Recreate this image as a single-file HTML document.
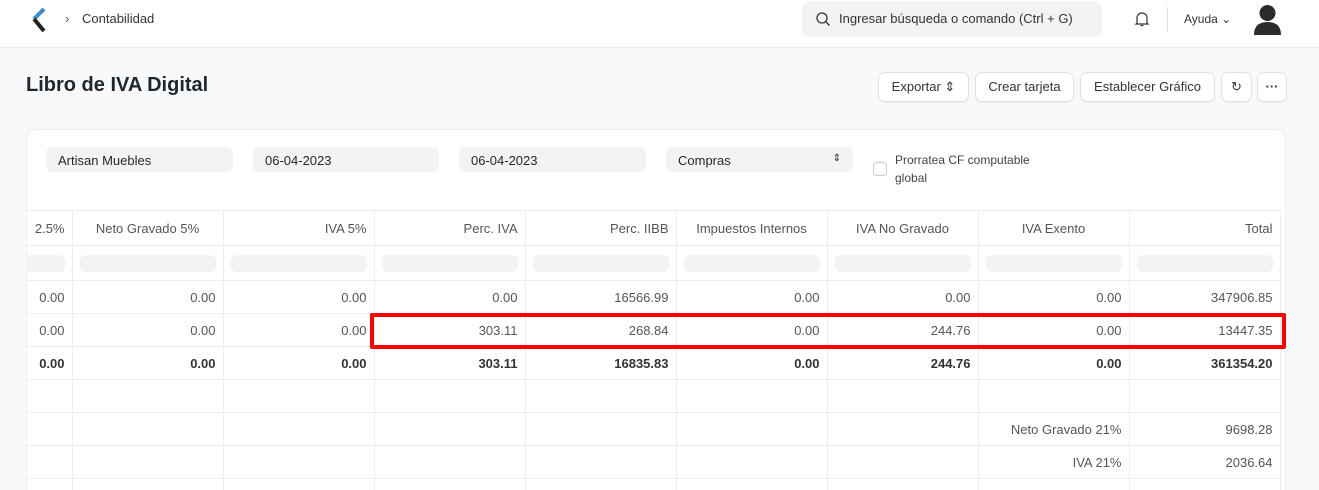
<!DOCTYPE html>
<html style="width:1319px;height:490px;overflow:hidden"><head><meta charset="utf-8"><style>
*{box-sizing:border-box;margin:0;padding:0}
body{width:1319px;height:490px;overflow:hidden;background:#f8f9fa;font-family:"Liberation Sans",sans-serif;color:#1f272e;position:relative}
.nav{position:absolute;left:0;top:0;width:1319px;height:48px;background:#fff;border-bottom:1px solid #e8eaed}
.abs{position:absolute}
.search{left:802px;top:1px;width:300px;height:36px;background:#f3f3f3;border-radius:8px;font-size:13px;color:#333;padding:10px 0 0 37px}
.btn{position:absolute;top:72px;height:30px;background:#fff;border:1px solid #dfe2e5;border-radius:7px;font-size:13px;color:#333;text-align:center;line-height:28px;box-shadow:0 1px 1px rgba(0,0,0,.05)}
.card{left:26px;top:129px;width:1260px;height:420px;background:#fff;border:1px solid #eceef0;border-radius:10px;overflow:hidden}
.inp{position:absolute;top:147px;height:25px;background:#f3f3f3;border-radius:6px;font-size:13px;color:#1f272e;padding:6px 0 0 12px}
table{position:absolute;left:26px;top:210px;border-collapse:collapse;table-layout:fixed;width:1254px;font-size:13px}
td{border:1px solid #ebeef0;height:33px;text-align:right;padding:0 7px;color:#555;white-space:nowrap;overflow:hidden}
tr.h td{height:35px;color:#555}
tr.f td{height:35px;padding:0 7px}
.pill{height:17px;background:#f3f3f3;border-radius:6px}
tr.b td{font-weight:bold;color:#333}
td:first-child{border-left:none}
</style></head><body>
<div class="nav">
<svg class="abs" style="left:31px;top:8px" width="16" height="24" viewBox="0 0 16 24"><path d="M13 1 L3 11" stroke="#3a8fc8" stroke-width="4"/><path d="M3 11 L13 23" stroke="#222" stroke-width="4"/></svg>
<div class="abs" style="left:65px;top:11px;font-size:13px;color:#555">&#8250;</div>
<div class="abs" style="left:82px;top:11px;font-size:13px;color:#333">Contabilidad</div>
<div class="abs search">Ingresar búsqueda o comando (Ctrl + G)</div>
<svg class="abs" style="left:815px;top:11px" width="16" height="16" viewBox="0 0 16 16"><circle cx="7" cy="7" r="5" fill="none" stroke="#333" stroke-width="1.3"/><path d="M11 11l3.5 3.5" stroke="#333" stroke-width="1.3"/></svg>
<svg class="abs" style="left:1133px;top:10px" width="18" height="18" viewBox="0 0 18 18"><path d="M4 13V8a5 5 0 0110 0v5l1 1H3z" fill="none" stroke="#333" stroke-width="1.2"/><path d="M7.5 15.5h3" stroke="#333" stroke-width="1.2"/></svg>
<div class="abs" style="left:1167px;top:7px;width:1px;height:24px;background:#e2e2e2"></div>
<div class="abs" style="left:1184px;top:12px;font-size:12px;color:#333">Ayuda &#8964;</div>
<svg class="abs" style="left:1253px;top:3px" width="29" height="32" viewBox="0 0 29 32"><circle cx="14.5" cy="10" r="8" fill="#2b2b2b"/><path d="M1 32 Q1 19 14.5 19 Q28 19 28 32z" fill="#2b2b2b"/></svg>
</div>
<div class="abs" style="left:26px;top:74px;font-size:20px;font-weight:bold;color:#1f272e">Libro de IVA Digital</div>
<div class="btn" style="left:878px;width:91px">Exportar &#8661;</div>
<div class="btn" style="left:975px;width:99px">Crear tarjeta</div>
<div class="btn" style="left:1080px;width:135px">Establecer Gráfico</div>
<div class="btn" style="left:1221px;width:31px">&#8635;</div>
<div class="btn" style="left:1257px;width:30px;font-weight:bold">&middot;&middot;&middot;</div>
<div class="abs card"></div>
<div class="inp" style="left:46px;width:187px">Artisan Muebles</div>
<div class="inp" style="left:253px;width:186px">06-04-2023</div>
<div class="inp" style="left:459px;width:187px">06-04-2023</div>
<div class="inp" style="left:666px;width:187px">Compras<span style="position:absolute;right:12px;top:6px;font-size:10px">&#8661;</span></div>
<div class="abs" style="left:873px;top:162px;width:14px;height:14px;border:1px solid #c7cbd0;border-radius:4px;background:#fff"></div>
<div class="abs" style="left:895px;top:151px;font-size:12px;line-height:18px;color:#444">Prorratea CF computable<br>global</div>
<table>
<colgroup><col style="width:46px"><col style="width:151px"><col style="width:151px"><col style="width:151px"><col style="width:151px"><col style="width:151px"><col style="width:151px"><col style="width:151px"><col style="width:151px"></colgroup>
<tr class="h"><td>2.5%</td><td style="text-align:center">Neto Gravado 5%</td><td>IVA 5%</td><td>Perc. IVA</td><td>Perc. IIBB</td><td style="text-align:center">Impuestos Internos</td><td style="text-align:center">IVA No Gravado</td><td style="text-align:center">IVA Exento</td><td>Total</td></tr>
<tr class="f"><td style="padding:0 7px 0 0"><div class="pill" style="border-radius:0 6px 6px 0"></div></td><td><div class="pill"></div></td><td><div class="pill"></div></td><td><div class="pill"></div></td><td><div class="pill"></div></td><td><div class="pill"></div></td><td><div class="pill"></div></td><td><div class="pill"></div></td><td><div class="pill"></div></td></tr>
<tr><td>0.00</td><td>0.00</td><td>0.00</td><td>0.00</td><td>16566.99</td><td>0.00</td><td>0.00</td><td>0.00</td><td>347906.85</td></tr>
<tr><td>0.00</td><td>0.00</td><td>0.00</td><td>303.11</td><td>268.84</td><td>0.00</td><td>244.76</td><td>0.00</td><td>13447.35</td></tr>
<tr class="b"><td>0.00</td><td>0.00</td><td>0.00</td><td>303.11</td><td>16835.83</td><td>0.00</td><td>244.76</td><td>0.00</td><td>361354.20</td></tr>
<tr><td></td><td></td><td></td><td></td><td></td><td></td><td></td><td></td><td></td></tr>
<tr><td></td><td></td><td></td><td></td><td></td><td></td><td></td><td>Neto Gravado 21%</td><td>9698.28</td></tr>
<tr><td></td><td></td><td></td><td></td><td></td><td></td><td></td><td>IVA 21%</td><td>2036.64</td></tr>
<tr><td></td><td></td><td></td><td></td><td></td><td></td><td></td><td></td><td></td></tr>
</table>
<div class="abs" style="left:370px;top:313px;width:916px;height:36px;border:4px solid #f00;border-radius:2px"></div>
</body></html>
